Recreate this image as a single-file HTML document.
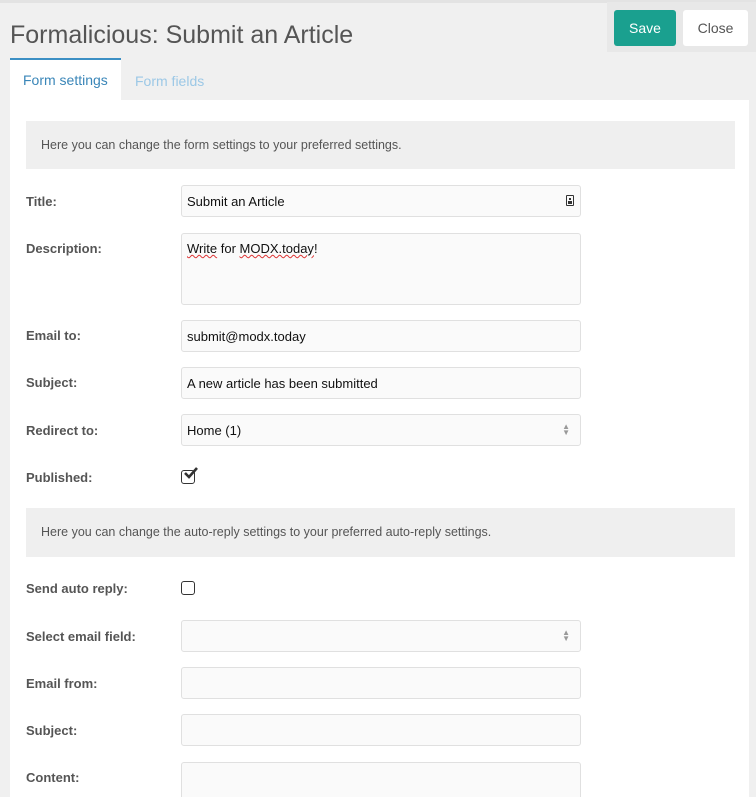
<!DOCTYPE html>
<html><head><style>
html,body{margin:0;width:756px;height:797px;overflow:hidden}
body{background:#f0f0f0;font-family:"Liberation Sans",Arial,sans-serif;position:relative}
.a{position:absolute}
h1{position:absolute;left:10px;top:21px;margin:0;font-weight:normal;font-size:25px;color:#555}
.btn{position:absolute;top:10px;height:36px;line-height:36px;font-size:14px;text-align:center;border-radius:3px}
.panel{position:absolute;left:10px;top:100px;width:739px;height:697px;background:#fff}
.info{position:absolute;left:26px;width:709px;background:#efefef;color:#555;font-size:12.5px;padding-left:15px;box-sizing:border-box}
.lbl{position:absolute;left:26px;font-size:13px;font-weight:bold;color:#555}
.f{position:absolute;left:181px;width:400px;height:32px;box-sizing:border-box;background:#fafafa;border:1px solid #e0e0e0;border-radius:3px;font-size:13px;color:#111;padding:8px 5px}
.cb{position:absolute;left:181px;width:14px;height:14px;box-sizing:border-box;border:1.5px solid #333;border-radius:3px}
.ud{position:absolute;right:10px;top:9px;font-size:8px;line-height:6px;color:#999}
</style></head><body>
<div class="a" style="left:0;top:0;width:756px;height:3px;background:#e3e3e3"></div>
<h1>Formalicious: Submit an Article</h1>
<div class="a" style="left:607px;top:2px;width:149px;height:50px;background:#e8e8e8"></div>
<div class="btn" style="left:614px;width:62px;background:#1aa08f;color:#fff">Save</div>
<div class="btn" style="left:683px;width:65px;background:#fff;color:#555">Close</div>
<div class="a" style="left:10px;top:58px;width:111px;height:42px;background:#fff;border-top:2px solid #3c8fc4;box-sizing:border-box"></div>
<div class="a" style="left:23px;top:72px;font-size:14px;color:#3a86b8">Form settings</div>
<div class="a" style="left:135px;top:73px;font-size:14px;color:#9cc8e6">Form fields</div>
<div class="panel"></div>
<div class="info" style="top:121px;height:48px;line-height:48px">Here you can change the form settings to your preferred settings.</div>
<div class="lbl" style="top:194px">Title:</div>
<div class="f" style="top:185px">Submit an Article<span class="a" style="right:6px;top:9px;width:8px;height:11px;border:1.5px solid #333;border-radius:1px;box-sizing:border-box"><span class="a" style="left:1.5px;top:1.5px;width:2px;height:2px;background:#333"></span><span class="a" style="left:0.5px;top:5px;width:4px;height:3px;background:#333"></span></span></div>
<div class="lbl" style="top:241px">Description:</div>
<div class="f" style="top:233px;height:72px;padding-top:7px"><span style="text-decoration:underline wavy #d33;text-decoration-thickness:1px">Write</span> for <span style="text-decoration:underline wavy #d33;text-decoration-thickness:1px">MODX.today</span>!</div>
<div class="lbl" style="top:328px">Email to:</div>
<div class="f" style="top:320px">submit@modx.today</div>
<div class="lbl" style="top:375px">Subject:</div>
<div class="f" style="top:367px">A new article has been submitted</div>
<div class="lbl" style="top:423px">Redirect to:</div>
<div class="f" style="top:414px">Home (1)<span class="ud">▲<br>▼</span></div>
<div class="lbl" style="top:470px">Published:</div>
<div class="cb" style="top:470px"></div>
<svg class="a" style="left:183px;top:466px" width="16" height="14" viewBox="0 0 16 14"><path d="M2 7 L6 11 L14 2" stroke="#333" stroke-width="2.6" fill="none"/></svg>
<div class="info" style="top:508px;height:49px;line-height:49px">Here you can change the auto-reply settings to your preferred auto-reply settings.</div>
<div class="lbl" style="top:581px">Send auto reply:</div>
<div class="cb" style="top:581px"></div>
<div class="lbl" style="top:629px">Select email field:</div>
<div class="f" style="top:620px"><span class="ud">▲<br>▼</span></div>
<div class="lbl" style="top:676px">Email from:</div>
<div class="f" style="top:667px"></div>
<div class="lbl" style="top:723px">Subject:</div>
<div class="f" style="top:714px"></div>
<div class="lbl" style="top:770px">Content:</div>
<div class="f" style="top:762px;height:40px;border-bottom:none"></div>
</body></html>
